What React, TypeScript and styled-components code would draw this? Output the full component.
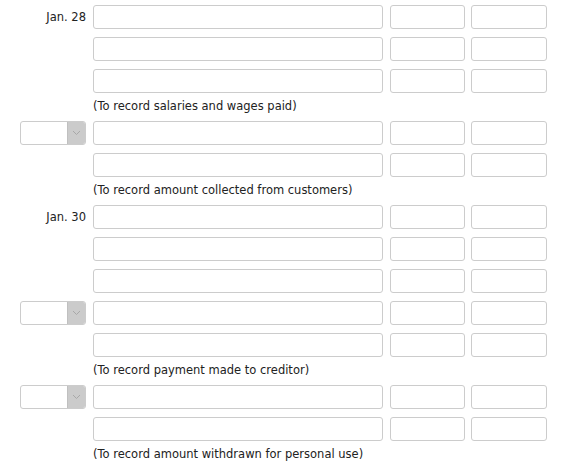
import React from "react";
import styled, { createGlobalStyle } from "styled-components";

const GlobalStyle = createGlobalStyle`
    html, body {
        margin: 0;
        padding: 0;
        background: #ffffff;
    }
    body {
        font-family: "DejaVu Sans", Verdana, sans-serif;
        font-size: 11.5px;
        color: #222222;
    }
`;

type Line =
    | { kind: "row"; date?: string; select?: boolean }
    | { kind: "note"; text: string };

const lines: Line[] = [
    { kind: "row", date: "Jan. 28" },
    { kind: "row" },
    { kind: "row" },
    { kind: "note", text: "(To record salaries and wages paid)" },
    { kind: "row", select: true },
    { kind: "row" },
    { kind: "note", text: "(To record amount collected from customers)" },
    { kind: "row", date: "Jan. 30" },
    { kind: "row" },
    { kind: "row" },
    { kind: "row", select: true },
    { kind: "row" },
    { kind: "note", text: "(To record payment made to creditor)" },
    { kind: "row", select: true },
    { kind: "row" },
    { kind: "note", text: "(To record amount withdrawn for personal use)" },
];

export default function App() {
    return (
        <>
            <GlobalStyle />
            <Journal>
                {lines.map((line, i) =>
                    line.kind === "note" ? (
                        <Note key={i}>{line.text}</Note>
                    ) : (
                        <EntryRow key={i}>
                            <DateCell>
                                {line.date}
                                {line.select && (
                                    <DateSelect>
                                        <SelectValue />
                                        <SelectArrow>
                                            <svg width="9" height="6" viewBox="0 0 9 6">
                                                <path d="M1 1 L4.5 4.5 L8 1" fill="none" stroke="#a8a8a8" strokeWidth="1" />
                                            </svg>
                                        </SelectArrow>
                                    </DateSelect>
                                )}
                            </DateCell>
                            <Field width={290} />
                            <Field width={75} gap={7} />
                            <Field width={76} gap={6} />
                        </EntryRow>
                    )
                )}
            </Journal>
        </>
    );
}

const Journal = styled.div`
    display: flex;
    flex-direction: column;
    padding-top: 5px;
`;

const EntryRow = styled.div`
    display: flex;
    align-items: center;
    height: 24px;
    margin-bottom: 8px;
`;

const DateCell = styled.div`
    width: 86px;
    flex: none;
    display: flex;
    justify-content: flex-end;
    align-items: center;
    margin-right: 7px;
    padding-right: 0;
    box-sizing: border-box;
    white-space: nowrap;
`;

const DateSelect = styled.div`
    display: flex;
    width: 66px;
    height: 24px;
    border: 1px solid #cccccc;
    border-radius: 3px;
    box-sizing: border-box;
    overflow: hidden;
    background: #ffffff;
`;

const SelectValue = styled.div`
    flex: 1;
`;

const SelectArrow = styled.div`
    width: 17px;
    display: flex;
    align-items: center;
    justify-content: center;
    background: #cbcbcb;
    border-left: 1px solid #c0c0c0;
`;

const Field = styled.div<{ width: number; gap?: number }>`
    width: ${({ width }) => width}px;
    height: 24px;
    flex: none;
    margin-left: ${({ gap }) => gap ?? 0}px;
    border: 1px solid #cccccc;
    border-radius: 3px;
    box-sizing: border-box;
    background: #ffffff;
`;

const Note = styled.div`
    padding-left: 93px;
    height: 16px;
    line-height: 16px;
    margin-top: -3px;
    margin-bottom: 7px;
    white-space: nowrap;
`;
